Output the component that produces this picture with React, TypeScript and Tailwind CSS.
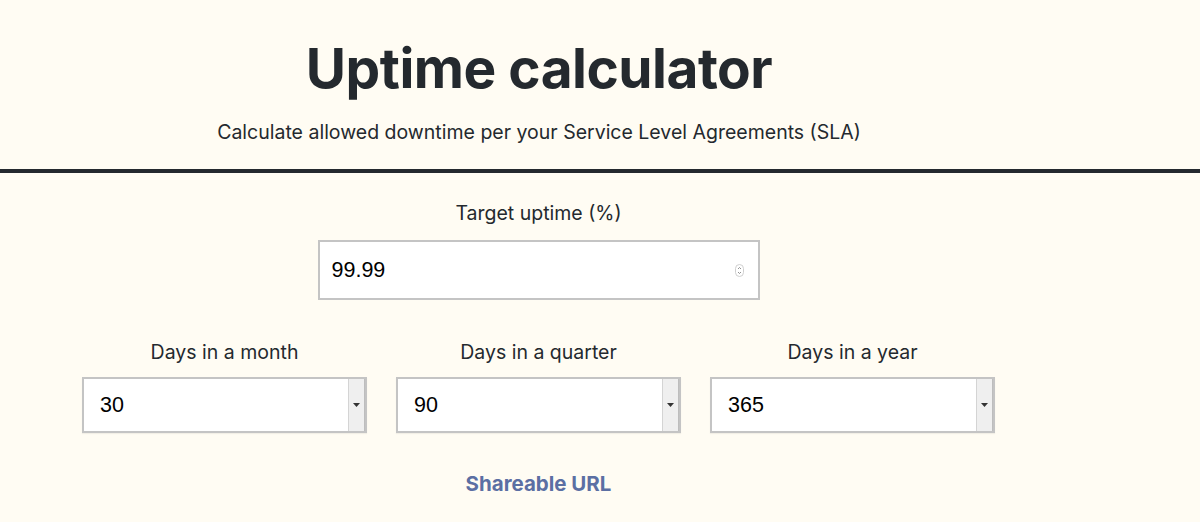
import React from 'react';

const SelectBox: React.FC<{ label: string; value: string }> = ({ label, value }) => (
  <div className="flex flex-col items-center w-[285px]">
    <label className="text-[19.5px] leading-[24px] text-[#24292e] mb-[13px]">{label}</label>
    <div className="w-full h-[56px] flex border-2 border-[#c4c4c4] bg-white shadow-[0_1px_1px_rgba(0,0,0,0.05)]">
      <div className="flex-1 flex items-center pl-[16px] text-[21.5px] text-black font-['Liberation_Sans',Arial,sans-serif]">
        {value}
      </div>
      <div className="w-[17px] bg-[#efefef] border-l border-[#d4d4d4] border-r border-r-[#bdbdbd] flex items-center justify-center">
        <svg width="7" height="4" viewBox="0 0 7 4">
          <path d="M0 0 L7 0 L3.5 4 Z" fill="#333" />
        </svg>
      </div>
    </div>
  </div>
);

export default function App() {
  return (
    <div className="min-h-[522px] bg-[#fffcf3] text-[#24292e] font-['Inter','Noto_Sans',sans-serif]">
      <header className="w-[1078px] flex flex-col items-center pt-[38px]">
        <h1 className="text-[55px] leading-[60px] font-bold tracking-[-0.5px]">Uptime calculator</h1>
        <p className="mt-[21px] text-[19.5px] leading-[26px]">
          Calculate allowed downtime per your Service Level Agreements (SLA)
        </p>
      </header>
      <div className="mt-[24px] h-[4px] bg-[#24292e]" />
      <main className="w-[1077px] flex flex-col items-center pt-[28px]">
        <label className="text-[19.5px] leading-[24px] mb-[15px]">Target uptime (%)</label>
        <div className="w-[442px] h-[60px] border-2 border-[#c4c4c4] bg-white flex items-center pl-[12px] pr-[14px]">
          <span className="flex-1 text-[21.5px] text-black font-['Liberation_Sans',Arial,sans-serif]">99.99</span>
          <svg width="9" height="13" viewBox="0 0 9 13">
            <rect x="0.5" y="0.5" width="8" height="12" rx="4" fill="#fff" stroke="#cfcfcf" />
            <path d="M3 5 L4.5 3.5 L6 5 M3 8 L4.5 9.5 L6 8" fill="none" stroke="#777" strokeWidth="0.8" />
          </svg>
        </div>
        <div className="mt-[40px] flex gap-[29px]">
          <SelectBox label="Days in a month" value="30" />
          <SelectBox label="Days in a quarter" value="90" />
          <SelectBox label="Days in a year" value="365" />
        </div>
        <a className="mt-[37px] text-[20.5px] leading-[28px] font-bold text-[#5b6fa3]">Shareable URL</a>
      </main>
    </div>
  );
}
